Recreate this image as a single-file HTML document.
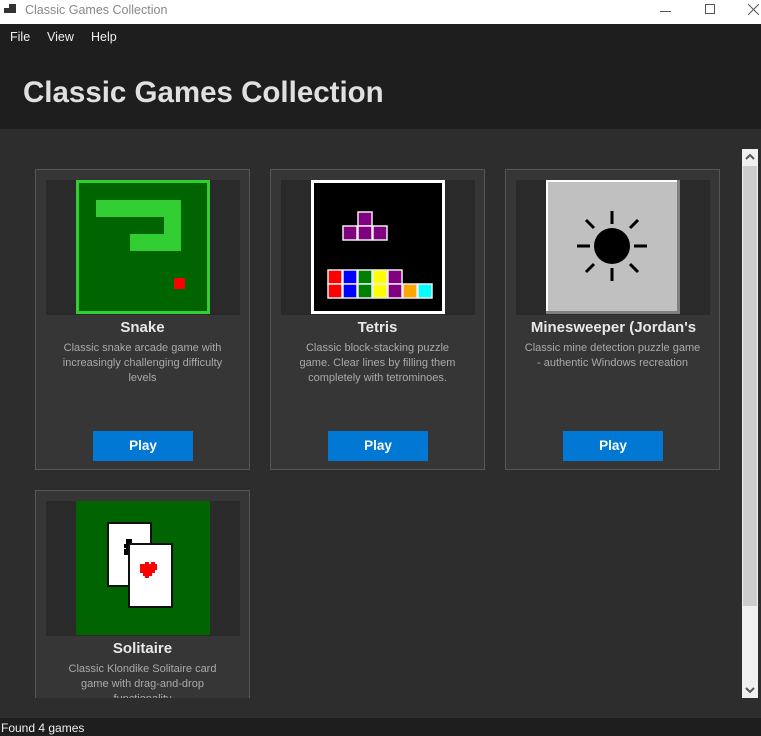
<!DOCTYPE html>
<html><head><meta charset="utf-8"><style>
*{margin:0;padding:0;box-sizing:border-box}
html,body{width:761px;height:736px;overflow:hidden}
body{background:#2d2d2d;font-family:"Segoe UI","Liberation Sans","DejaVu Sans",sans-serif;position:relative}
.abs{position:absolute}
#tb{left:0;top:0;width:761px;height:24px;background:#fff}
#hdr{left:0;top:24px;width:761px;height:105px;background:#1e1e1e}
.menu{top:30px;font-size:12.5px;color:#eee}
h1{position:absolute;left:23px;top:76px;font-size:29.5px;font-weight:bold;color:#e0e0e0}
.card{position:absolute;width:215px;height:301px;background:#363636;border:1px solid #565656}
.imgbg{position:absolute;left:10px;top:10px;width:194px;height:135px;background:#2a2a2a}
.img{position:absolute;left:40px;top:10px;width:134px;height:134px}
.t{position:absolute;left:0;width:213px;top:149px;text-align:center;color:#e8e8e8;font-weight:bold;font-size:15px}
.d{position:absolute;left:16px;width:181px;top:171px;text-align:center;color:#aaa;font-size:11px;line-height:15px}
.btn{position:absolute;left:57px;top:261px;width:100px;height:30px;background:#0078d4;color:#fff;font-weight:bold;font-size:13.5px;text-align:center;line-height:30px}
</style></head><body>
<div id="tb" class="abs">
 <svg class="abs" style="left:4px;top:3px" width="14" height="14"><rect x="0" y="5" width="5" height="5" fill="#333"/><rect x="5" y="1" width="7" height="9" fill="#333"/></svg>
 <div class="abs" style="left:25px;top:3px;font-size:12.5px;color:#888">Classic Games Collection</div>
 <div class="abs" style="left:660px;top:11px;width:11px;height:1px;background:#555"></div>
 <div class="abs" style="left:705px;top:4px;width:10px;height:10px;border:1px solid #555"></div>
 <svg class="abs" style="left:748px;top:4px" width="11" height="11"><path d="M0 0L11 11M11 0L0 11" stroke="#555" stroke-width="1"/></svg>
</div>
<div id="hdr" class="abs"></div>
<div class="abs menu" style="left:10px">File</div>
<div class="abs menu" style="left:47px">View</div>
<div class="abs menu" style="left:91px">Help</div>
<h1>Classic Games Collection</h1>

<div class="card" style="left:35px;top:169px">
 <div class="imgbg"></div>
 <svg class="img" viewBox="0 0 134 134"><rect x="1.5" y="1.5" width="131" height="131" fill="#006400" stroke="#32cd32" stroke-width="3"/><path d="M20 20H105V71H54V54H88V37H20Z" fill="#32cd32"/><rect x="98" y="98" width="11" height="11" fill="#f00"/></svg>
 <div class="t">Snake</div>
 <div class="d">Classic snake arcade game with increasingly challenging difficulty levels</div>
 <div class="btn">Play</div>
</div>

<div class="card" style="left:270px;top:169px">
 <div class="imgbg"></div>
 <svg class="img" viewBox="0 0 134 134"><rect x="1.5" y="1.5" width="131" height="131" fill="#000" stroke="#fff" stroke-width="3"/>
 <g stroke="#eee" stroke-width="1.5">
 <rect x="47" y="32" width="14" height="14" fill="#800080"/>
 <rect x="32" y="46" width="14" height="14" fill="#800080"/><rect x="47" y="46" width="14" height="14" fill="#800080"/><rect x="62" y="46" width="14" height="14" fill="#800080"/>
 <rect x="17" y="90" width="14" height="14" fill="#f00"/><rect x="32" y="90" width="14" height="14" fill="#00f"/><rect x="47" y="90" width="14" height="14" fill="#008000"/><rect x="62" y="90" width="14" height="14" fill="#ff0"/><rect x="77" y="90" width="14" height="14" fill="#800080"/>
 <rect x="17" y="104" width="14" height="14" fill="#f00"/><rect x="32" y="104" width="14" height="14" fill="#00f"/><rect x="47" y="104" width="14" height="14" fill="#008000"/><rect x="62" y="104" width="14" height="14" fill="#ff0"/><rect x="77" y="104" width="14" height="14" fill="#800080"/><rect x="92" y="104" width="14" height="14" fill="#ffa500"/><rect x="107" y="104" width="14" height="14" fill="#0ff"/>
 </g></svg>
 <div class="t">Tetris</div>
 <div class="d" style="left:22px;width:169px">Classic block-stacking puzzle game. Clear lines by filling them completely with tetrominoes.</div>
 <div class="btn">Play</div>
</div>

<div class="card" style="left:505px;top:169px">
 <div class="imgbg"></div>
 <svg class="img" viewBox="0 0 134 134"><rect width="134" height="134" fill="#c0c0c0"/><rect x="0" y="0" width="134" height="2" fill="#fff"/><rect x="0" y="0" width="2" height="134" fill="#fff"/><rect x="131" y="0" width="3" height="134" fill="#808080"/><rect x="0" y="131" width="134" height="3" fill="#808080"/>
 <circle cx="66" cy="66" r="18" fill="#000"/>
 <g stroke="#000" stroke-width="3"><path d="M66 31V44M66 88V101M31 66H44M88 66H101M40 40L48 48M84 84L92 92M92 40L84 48M48 84L40 92"/></g></svg>
 <div class="t" style="left:-5px;width:225px;white-space:nowrap;overflow:hidden">Minesweeper (Jordan's</div>
 <div class="d">Classic mine detection puzzle game - authentic Windows recreation</div>
 <div class="btn">Play</div>
</div>

<div style="position:absolute;left:0;top:0;width:761px;height:698px;overflow:hidden">
<div class="card" style="left:35px;top:490px">
 <div class="imgbg"></div>
 <svg class="img" viewBox="0 0 134 134"><rect width="134" height="134" fill="#006400"/>
 <rect x="32" y="22" width="43" height="63" fill="#fff" stroke="#111" stroke-width="2"/>
 <path d="M50 38h6v5h-4v4h4v5h-6v-5h-2v-4h2z" fill="#000"/>
 <path d="M48 48h6v6h-6z" fill="#000"/>
 <rect x="53" y="43" width="43" height="63" fill="#fff" stroke="#111" stroke-width="2"/>
 <path d="M64 63h5v-2h4v2h2v-2h4v2h2v6h-2v3h-3v3h-3v2h-4v-2h-2v-3h-3z" fill="#f00"/></svg>
 <div class="t">Solitaire</div>
 <div class="d" style="left:24px;width:165px">Classic Klondike Solitaire card game with drag-and-drop functionality</div>
</div>
</div>

<div class="abs" style="left:742px;top:149px;width:16px;height:549px;background:#f0f0f0"></div>
<div class="abs" style="left:743px;top:166px;width:14px;height:440px;background:#cdcdcd"></div>
<svg class="abs" style="left:745px;top:153px" width="10" height="8"><path d="M1 6L5 2L9 6" stroke="#555" stroke-width="2" fill="none"/></svg>
<svg class="abs" style="left:745px;top:686px" width="10" height="8"><path d="M1 2L5 6L9 2" stroke="#555" stroke-width="2" fill="none"/></svg>

<div class="abs" style="left:0;top:718px;width:761px;height:18px;background:#1e1e1e"></div>
<div class="abs" style="left:1px;top:721px;font-size:12px;color:#eee">Found 4 games</div>
</body></html>
